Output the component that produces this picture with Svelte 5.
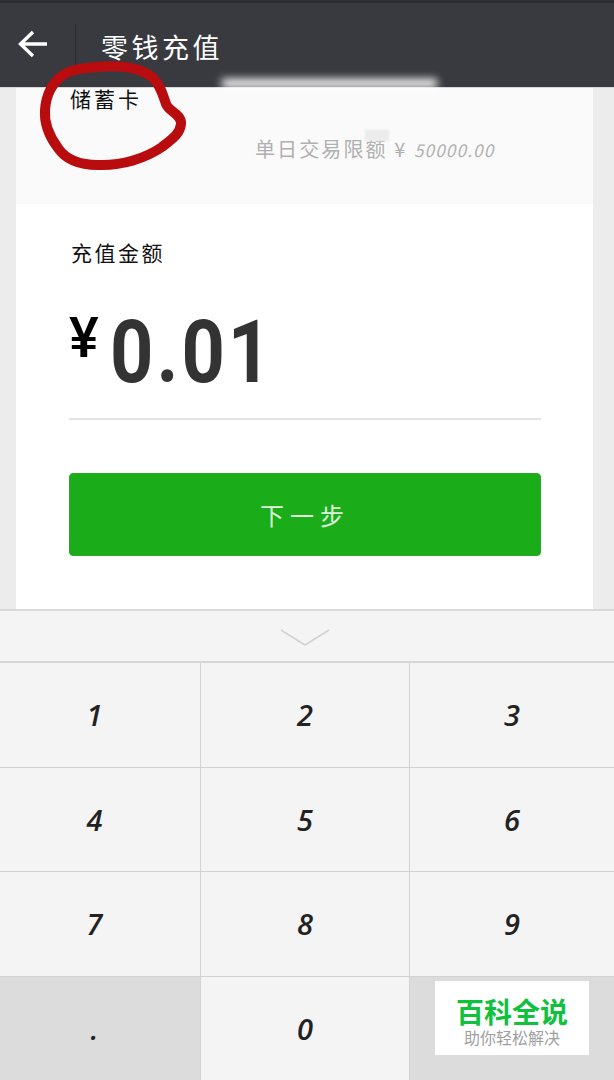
<script>
  const keys = ['1', '2', '3', '4', '5', '6', '7', '8', '9', '.', '0', '']
</script>

<div class="page">
  <header>
    <div class="status"></div>
    <div class="bar">
      <svg class="back" width="32" height="30" viewBox="0 0 32 30">
        <path d="M30 15H4M16 3 3.500 15 16 27" fill="none" stroke="#fff" stroke-width="3.400" />
      </svg>
      <span class="divider"></span>
      <h1>零钱充值</h1>
    </div>
  </header>

  <main>
    <section class="card-info">
      <p class="card-name">储蓄卡</p>
      <p class="limit">单日交易限额 ¥ <i>50000.00</i></p>
    </section>
    <section class="amount">
      <p class="label">充值金额</p>
      <div class="value"><span class="currency">¥</span><span class="number">0.01</span></div>
      <button>下一步</button>
    </section>
  </main>

  <div class="keyboard">
    <div class="collapse">
      <svg width="50" height="20" viewBox="0 0 50 20">
        <path d="M1 2 25 17 49 2" fill="none" stroke="#d2d2d2" stroke-width="1.500" />
      </svg>
    </div>
    <div class="keys">
      {#each keys as key}
        <div class="key" class:dark={key === '.' || key === ''}>{key}</div>
      {/each}
    </div>
  </div>

  <!-- annotations on top of the screenshot -->
  <div class="smudge"></div>
  <div class="smudge small"></div>
  <svg class="circle" width="160" height="120" viewBox="30 55 160 120">
    <path
      d="M98 67C120 65 140 68 152 77C160 84 163 95 166 104C169 112 182 114 181 124C180 134 172 139 162 147C146 158 122 166 98 165C80 165 66 160 58 148C49 136 44 124 45 110C46 95 52 83 63 75C72 69 85 68 98 67Z"
      fill="none"
      stroke="#b80c0e"
      stroke-width="10"
    />
  </svg>
  <div class="watermark">
    <strong>百科全说</strong>
    <span>助你轻松解决</span>
  </div>
</div>

<style>
  :global(body) {
    margin: 0;
    background: #ececec;
  }
  .page {
    position: relative;
    width: 614px;
    height: 1080px;
    overflow: hidden;
    display: flex;
    flex-direction: column;
    font-family: "Noto Sans CJK SC", "Noto Sans", sans-serif;
  }
  header {
    background: #393a3f;
    height: 87px;
    flex: none;
    border-bottom: 1px solid #d8d8d8;
  }
  .status {
    height: 3px;
    background: #2c2d30;
  }
  .bar {
    display: flex;
    align-items: center;
    height: 84px;
    padding-left: 17px;
  }
  .back {
    flex: none;
    margin-top: -2px;
  }
  .divider {
    width: 1px;
    height: 42px;
    background: #2b2c30;
    margin: 0 25px 0 26px;
  }
  h1 {
    margin: 2px 0 0;
    font-size: 27px;
    font-weight: 400;
    letter-spacing: 3.500px;
    color: #fff;
  }
  main {
    flex: 1;
    margin: 0 21px 0 16px;
    background: #fff;
    display: flex;
    flex-direction: column;
  }
  p {
    margin: 0;
  }
  .card-info {
    height: 116px;
    background: #fafafa;
    flex: none;
    padding: 0 54px;
  }
  .card-name {
    font-size: 21px;
    line-height: 24px;
    letter-spacing: 3px;
    color: #111;
    margin-top: -2px;
  }
  .limit {
    margin-top: 25px;
    margin-left: 185px;
    font-size: 20px;
    line-height: 28px;
    letter-spacing: 2.100px;
    color: #b0b0b0;
    white-space: nowrap;
  }
  .limit i {
    font-size: 17px;
    letter-spacing: 1.200px;
  }
  .amount {
    padding: 34px 52px 0 53px;
  }
  .label {
    font-size: 21px;
    line-height: 28px;
    letter-spacing: 2.500px;
    color: #111;
    padding-left: 2px;
  }
  .value {
    display: flex;
    align-items: flex-start;
    height: 100px;
    margin-top: 52px;
    border-bottom: 2px solid #e2e2e2;
  }
  .currency {
    font-family: "Roboto", sans-serif;
    font-size: 56px;
    line-height: 54px;
    margin-top: -7px;
    color: #000;
    width: 41px;
    font-weight: 500;
  }
  .number {
    font-family: "Roboto", sans-serif;
    font-weight: 700;
    font-size: 88px;
    line-height: 88px;
    letter-spacing: 3.500px;
    color: #333;
    margin-top: -10px;
    transform: scaleX(0.86);
    transform-origin: left center;
  }
  button {
    display: block;
    width: 100%;
    height: 83px;
    margin-top: 53px;
    background: #1aad19;
    border: 1px solid #2aa928;
    border-radius: 4px;
    color: #dff3df;
    font-family: inherit;
    font-size: 24px;
    letter-spacing: 6px;
  }
  .keyboard {
    flex: none;
    height: 471px;
    background: #f4f4f4;
    border-top: 2px solid #d9d9d9;
    box-sizing: border-box;
  }
  .collapse {
    height: 52px;
    display: flex;
    align-items: center;
    justify-content: center;
    padding: 4px 4px 0 0;
    box-sizing: border-box;
    border-bottom: 2px solid #d6d6d6;
  }
  .keys {
    display: grid;
    grid-template-columns: 201px 209px 1fr;
    grid-auto-rows: 104.500px;
  }
  .key {
    display: flex;
    align-items: center;
    justify-content: center;
    font-family: "Open Sans", sans-serif;
    font-style: italic;
    font-weight: 600;
    font-size: 29px;
    color: #222;
    border-right: 1px solid #d2d2d2;
    border-bottom: 1px solid #d2d2d2;
    box-sizing: border-box;
  }
  .key:nth-child(3n) {
    border-right: 0;
  }
  .key:nth-child(3n + 1) {
    padding-right: 11px;
  }
  .key.dark {
    background: #dcdcdc;
  }
  .smudge {
    position: absolute;
    left: 222px;
    top: 79px;
    width: 215px;
    height: 9px;
    background: #fff;
    filter: blur(4px);
  }
  .smudge.small {
    left: 365px;
    top: 130px;
    width: 24px;
    height: 11px;
    background: #ececec;
    filter: blur(1px);
  }
  .circle {
    position: absolute;
    left: 30px;
    top: 55px;
  }
  .watermark {
    position: absolute;
    left: 435px;
    top: 981px;
    width: 154px;
    height: 74px;
    background: #fff;
    display: flex;
    flex-direction: column;
    align-items: center;
  }
  .watermark strong {
    margin-top: 15px;
    font-size: 28px;
    line-height: 30px;
    font-weight: 700;
    color: #0fc13c;
  }
  .watermark span {
    font-size: 16px;
    line-height: 22px;
    color: #a0a0a0;
  }
</style>
